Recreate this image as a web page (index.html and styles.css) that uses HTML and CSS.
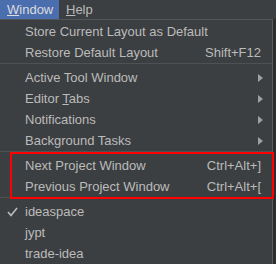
FILE: index.html
```html
<!DOCTYPE html>
<html lang="en">
<head>
  <meta charset="UTF-8" />
  <title>Window menu</title>
  <link rel="stylesheet" href="styles.css">
</head>
<body>
  <div class="menubar">
    <div class="menu active"><u>W</u>indow</div>
    <div class="menu"><u>H</u>elp</div>
  </div>

  <div class="frame">
    <div class="popup">
      <div class="item"><span>Store Current Layout as Default</span></div>
      <div class="item"><span>Restore Default Layout</span><span class="key">Shift+F12</span></div>
      <div class="sep"></div>
      <div class="item"><span>Active Tool Window</span><span class="arrow"></span></div>
      <div class="item"><span>Editor <u>T</u>abs</span><span class="arrow"></span></div>
      <div class="item"><span>Notifications</span><span class="arrow"></span></div>
      <div class="item"><span>Background Tasks</span><span class="arrow"></span></div>
      <div class="sep"></div>
      <div class="group marked">
        <div class="item"><span>Next Project Window</span><span class="key">Ctrl+Alt+]</span></div>
        <div class="item"><span>Previous Project Window</span><span class="key">Ctrl+Alt+[</span></div>
      </div>
      <div class="sep"></div>
      <div class="item checked">
        <svg class="check" width="11" height="10" viewBox="0 0 11 10"><polyline points="1,5 4,8.5 10,1" fill="none" stroke="#bbbbbb" stroke-width="1.6"/></svg>
        <span>ideaspace</span>
      </div>
      <div class="item"><span>jypt</span></div>
      <div class="item"><span>trade-idea</span></div>
    </div>
    <div class="side"></div>
  </div>
</body>
</html>
```

FILE: styles.css
```css
* {
  box-sizing: border-box;
}

body {
  margin: 0;
  background: #2b2b2b;
  font-family: 'Liberation Sans', Arial, sans-serif;
  font-size: 13px;
  color: #bbbbbb;
  overflow: hidden;
}

.menubar {
  display: flex;
  height: 19px;
  background: #3c3f41;
}

.menu {
  padding: 0 7px;
  line-height: 19px;
}

.menu.active {
  background: #4b6eaf;
  color: #dcdcdc;
  width: 59px;
}

.frame {
  display: flex;
}

.popup {
  width: 273px;
  background: #3c3f41;
  border-top: 1px solid #515658;
  border-right: 1px solid #5a5d5f;
  padding-top: 1px;
}

.side {
  flex: 1;
  background: #2b2d2f;
}

.item {
  position: relative;
  display: flex;
  align-items: center;
  justify-content: space-between;
  height: 21px;
  padding: 0 11px 0 25px;
  white-space: nowrap;
}

.key {
  color: #bbbbbb;
}

.arrow {
  width: 0;
  height: 0;
  margin-right: -2px;
  border-top: 4px solid transparent;
  border-bottom: 4px solid transparent;
  border-left: 5px solid #a0a0a0;
}

.check {
  position: absolute;
  left: 7px;
  top: 6px;
}

.sep {
  height: 4px;
  padding-top: 0;
  border-top: 1px solid #4e5254;
}

.group {
  position: relative;
}

.group.marked::after {
  content: '';
  position: absolute;
  top: -3px;
  bottom: -2px;
  left: 10px;
  right: -2px;
  border: 2px solid #ff0000;
}
```
